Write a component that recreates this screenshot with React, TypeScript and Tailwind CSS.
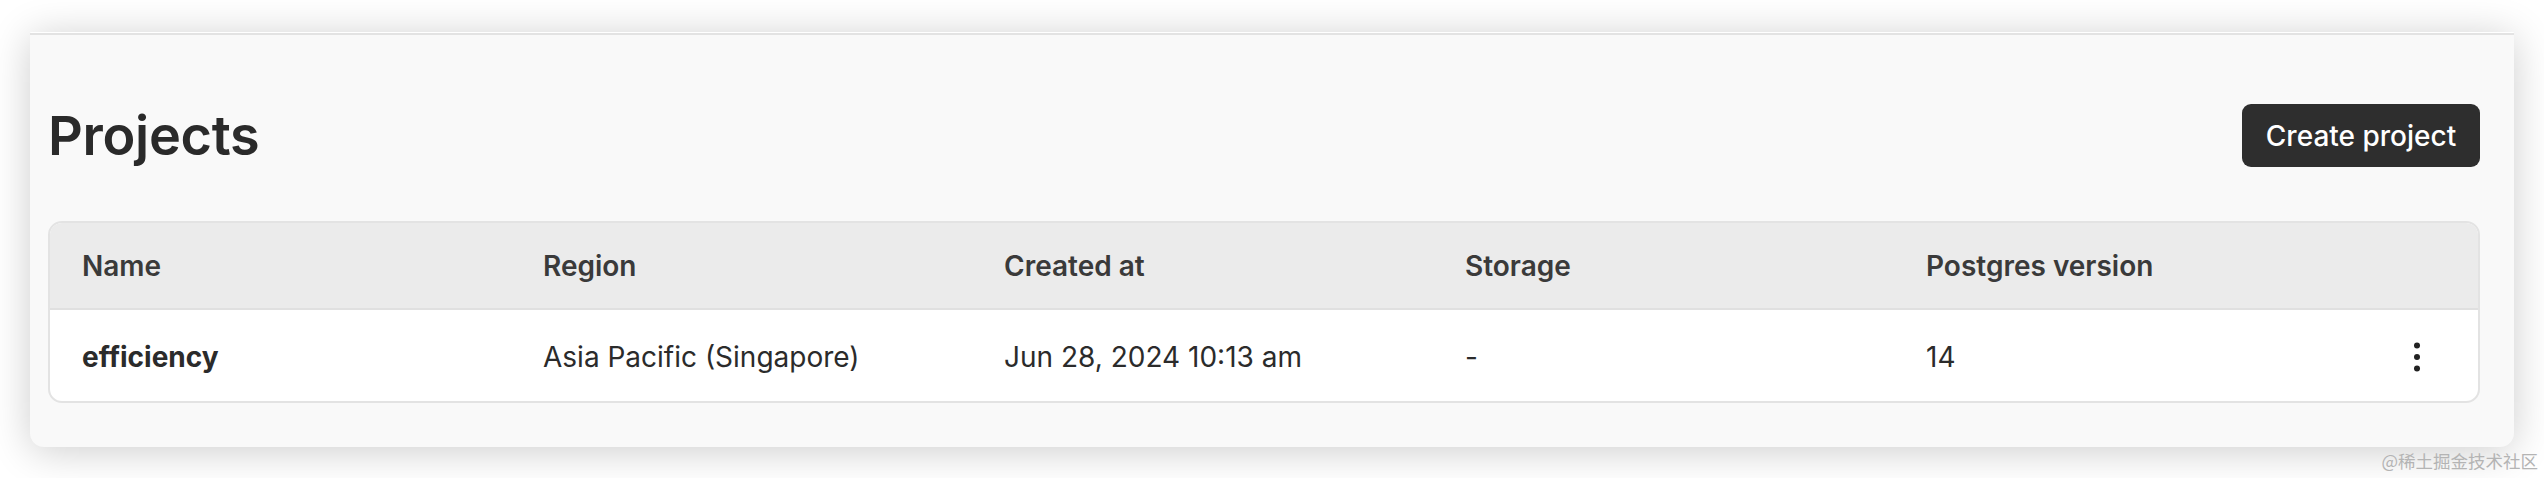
import React from "react";

const cols = ["Name", "Region", "Created at", "Storage", "Postgres version"];

function Kebab() {
  return (
    <svg width="8" height="32" viewBox="0 0 8 32" fill="#222">
      <circle cx="4" cy="4.5" r="3" />
      <circle cx="4" cy="16" r="3" />
      <circle cx="4" cy="27.5" r="3" />
    </svg>
  );
}

export default function App() {
  return (
    <div
      className="relative w-[2544px] h-[478px] bg-white overflow-hidden"
      style={{ fontFamily: "Inter, 'Noto Sans', sans-serif" }}
    >
      <div className="ml-[30px] mt-[32px] w-[2484px] h-[415px] flex flex-col bg-[#f9f9f9] rounded-t-[4px] rounded-b-[14px] shadow-[0_4px_40px_rgba(0,0,0,0.2)]">
        <div className="h-px bg-white rounded-t-[4px]" />
        <div className="h-[2px] bg-[#e3e3e3]" />
        <div className="flex flex-col pl-[18px] pr-[34px] pt-[69px] pb-[42px]">
          <div className="h-[63px] flex items-center justify-between">
            <h1 className="text-[54px] leading-none font-semibold text-[#2a2a2a] tracking-[-0.3px]">
              Projects
            </h1>
            <button className="w-[238px] h-[63px] rounded-[9px] bg-[#2e2e2e] text-white text-[28px] font-medium leading-none flex items-center justify-center">
              Create project
            </button>
          </div>
          <div className="mt-[54px] border-2 border-[#e3e3e3] rounded-[14px] overflow-hidden bg-white">
            <div className="grid grid-cols-[461px_461px_461px_461px_461px_1fr] h-[87px] items-center bg-[#ebebeb] border-b-2 border-[#e0e0e0]">
              {cols.map((c) => (
                <div key={c} className="pl-[32px] text-[28px] font-semibold text-[#3a3a3a] leading-none">
                  {c}
                </div>
              ))}
              <div />
            </div>
            <div className="grid grid-cols-[461px_461px_461px_461px_461px_1fr] h-[91px] pt-[3px] items-center text-[28px] leading-none text-[#2b2b2b]">
              <div className="pl-[32px] font-bold">efficiency</div>
              <div className="pl-[32px]">Asia Pacific (Singapore)</div>
              <div className="pl-[32px]">Jun 28, 2024 10:13 am</div>
              <div className="pl-[32px]">-</div>
              <div className="pl-[32px]">14</div>
              <div className="flex items-center justify-center">
                <Kebab />
              </div>
            </div>
          </div>
        </div>
      </div>
      <div
        className="absolute right-[6px] top-[449px] text-[17.5px] leading-[24px] text-[#b4b4b4]"
        style={{ fontFamily: "'Noto Sans CJK SC', sans-serif" }}
      >
        @稀土掘金技术社区
      </div>
    </div>
  );
}
